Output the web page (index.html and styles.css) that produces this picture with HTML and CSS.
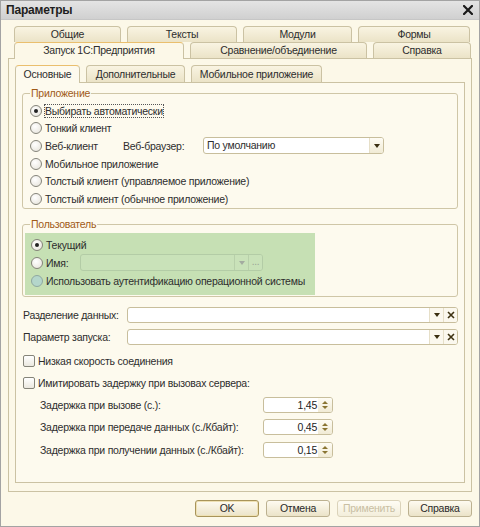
FILE: index.html
```html
<!DOCTYPE html>
<html lang="ru">
<head>
<meta charset="utf-8">
<title>Параметры</title>
<link rel="stylesheet" href="styles.css">
</head>
<body>
<div class="window">
  <div class="titlebar">
    <span class="title">Параметры</span>
    <span class="close"><svg width="10" height="10" viewBox="0 0 10 10"><path d="M1 1L9 9M9 1L1 9" stroke="#1a1a1a" stroke-width="2.2" stroke-linecap="square"/></svg></span>
  </div>
  <div class="body">
    <div class="tabrow row1">
      <div class="tab w107">Общие</div>
      <div class="tab w110">Тексты</div>
      <div class="tab w109">Модули</div>
      <div class="tab w112">Формы</div>
    </div>
    <div class="tabrow row2">
      <div class="tab sel w170">Запуск 1С:Предприятия</div>
      <div class="tab w177">Сравнение/объединение</div>
      <div class="tab w98">Справка</div>
    </div>
    <div class="panel outer">
      <div class="tabrow itabs">
        <div class="tab sel w65">Основные</div>
        <div class="tab w99">Дополнительные</div>
        <div class="tab w131">Мобильное приложение</div>
      </div>
      <div class="panel inner">
        <div class="group g1">
          <div class="legend">Приложение</div>
          <div class="rows">
            <div class="row"><span class="radio checked"></span><span class="focus">Выбирать автоматически</span></div>
            <div class="row"><span class="radio"></span><span>Тонкий клиент</span></div>
            <div class="row">
              <span class="ritem w93"><span class="radio"></span><span>Веб-клиент</span></span>
              <span class="lbl w80">Веб-браузер:</span>
              <span class="combo w181"><span class="val">По умолчанию</span><span class="cbtn"><span class="arrow"></span></span></span>
            </div>
            <div class="row"><span class="radio"></span><span>Мобильное приложение</span></div>
            <div class="row"><span class="radio"></span><span>Толстый клиент (управляемое приложение)</span></div>
            <div class="row"><span class="radio"></span><span>Толстый клиент (обычное приложение)</span></div>
          </div>
        </div>
        <div class="group g2">
          <div class="legend">Пользователь</div>
          <div class="green">
            <div class="row"><span class="radio checked"></span><span>Текущий</span></div>
            <div class="row">
              <span class="ritem w49"><span class="radio"></span><span>Имя:</span></span>
              <span class="combo dis w183"><span class="val"></span><span class="cbtn"><span class="arrow grey"></span></span><span class="cbtn dots">...</span></span>
            </div>
            <div class="row"><span class="radio hl"></span><span>Использовать аутентификацию операционной системы</span></div>
          </div>
        </div>
        <div class="frow f1">
          <span class="flabel">Разделение данных:</span>
          <span class="combo field"><span class="val"></span><span class="cbtn"><span class="arrow"></span></span><span class="cbtn"><svg width="8" height="8" viewBox="0 0 8 8"><path d="M1 1L7 7M7 1L1 7" stroke="#3e3212" stroke-width="1.6"/></svg></span></span>
        </div>
        <div class="frow f2">
          <span class="flabel">Параметр запуска:</span>
          <span class="combo field"><span class="val"></span><span class="cbtn"><span class="arrow"></span></span><span class="cbtn"><svg width="8" height="8" viewBox="0 0 8 8"><path d="M1 1L7 7M7 1L1 7" stroke="#3e3212" stroke-width="1.6"/></svg></span></span>
        </div>
        <div class="crow c1"><span class="check"></span><span>Низкая скорость соединения</span></div>
        <div class="crow c2"><span class="check"></span><span>Имитировать задержку при вызовах сервера:</span></div>
        <div class="drow d1"><span class="dlabel">Задержка при вызове (с.):</span><span class="spin"><span class="val">1,45</span><span class="sbtn"><span class="up"></span><span class="down"></span></span></span></div>
        <div class="drow d2"><span class="dlabel">Задержка при передаче данных (с./Кбайт):</span><span class="spin"><span class="val">0,45</span><span class="sbtn"><span class="up"></span><span class="down"></span></span></span></div>
        <div class="drow d3"><span class="dlabel">Задержка при получении данных (с./Кбайт):</span><span class="spin"><span class="val">0,15</span><span class="sbtn"><span class="up"></span><span class="down"></span></span></span></div>
      </div>
    </div>
    <div class="buttons">
      <div class="button default">OK</div>
      <div class="button">Отмена</div>
      <div class="button disabled">Применить</div>
      <div class="button">Справка</div>
    </div>
  </div>
</div>
</body>
</html>
```
FILE: styles.css
```css
* { box-sizing: border-box; }
html, body { margin: 0; padding: 0; }
body {
  width: 480px;
  height: 527px;
  font-family: "Liberation Sans", Arial, sans-serif;
  font-size: 10.5px;
  letter-spacing: -0.25px;
  color: #2d2d2d;
  background: #fcf8e8;
  overflow: hidden;
}
.window {
  width: 480px;
  height: 527px;
  border: 1px solid #a3a3a3;
  background: #fcf8e8;
  display: flex;
  flex-direction: column;
}
.titlebar {
  height: 19px;
  flex: none;
  display: flex;
  align-items: center;
  justify-content: space-between;
  padding: 0 6px 0 5px;
  background: linear-gradient(#e4e4e4, #d0d0d0);
  border-bottom: 1px solid #c6c6c6;
}
.title { font-weight: bold; font-size: 12px; letter-spacing: -0.2px; color: #1e1e1e; }
.close svg { display: block; }
.body {
  flex: 1;
  padding: 6px 7px 0;
  display: flex;
  flex-direction: column;
}
.tabrow { display: flex; gap: 6px; height: 16px; align-items: flex-start; flex: none; }
.row1, .row2 { padding-left: 6px; }
.tab {
  height: 16px;
  border: 1px solid #cbc2a3;
  border-bottom: none;
  border-radius: 4px 4px 0 0;
  background: linear-gradient(#f9f4e2, #ebe3c7);
  text-align: center;
  line-height: 15px;
  white-space: nowrap;
  flex: none;
}
.tab.sel {
  height: 17px;
  position: relative;
  z-index: 1;
  background: #fcf8e8;
  border-top-color: #eabf6e;
}
.itabs { height: 17px; }
.itabs .tab { height: 17px; line-height: 16px; }
.itabs .tab.sel { height: 18px; background: #fdfaee; }
.w107 { width: 107px; } .w110 { width: 110px; } .w109 { width: 109px; } .w112 { width: 112px; }
.w170 { width: 170px; } .w177 { width: 177px; } .w98 { width: 98px; }
.w65 { width: 65px; } .w99 { width: 99px; } .w131 { width: 131px; }

.panel { border: 1px solid #cbc2a3; flex: none; }
.outer { height: 434px; padding: 6px 6px 0; background: #fcf8e8; display: flex; flex-direction: column; }
.inner { height: 401px; padding: 0 6px; background: #fdfaee; }

.group { border: 1px solid #cfc6a7; border-radius: 3px; }
.g1 { margin-top: 10px; }
.g2 { margin-top: 15px; }
.legend {
  width: max-content;
  margin: -7px 0 0 7px;
  padding: 0 1px;
  line-height: 13px;
  height: 13px;
  background: #fdfaee;
  color: #a05a18;
}
.rows { padding: 2px 0 0 7px; }
.row { height: 17.6px; display: flex; align-items: center; white-space: nowrap; }
.radio {
  width: 12px;
  height: 12px;
  border-radius: 50%;
  border: 1px solid #85847a;
  background: radial-gradient(circle at 40% 35%, #ffffff, #e4e1d7);
  margin-right: 3px;
  flex: none;
  display: flex;
  align-items: center;
  justify-content: center;
}
.radio.checked::after {
  content: "";
  width: 4px;
  height: 4px;
  border-radius: 50%;
  background: #222;
}
.radio.hl { background: #b4d6cb; border-color: #8fa8a0; }
.focus { outline: 1px dotted #555; outline-offset: 0; }
.ritem { display: flex; align-items: center; flex: none; }
.w93 { width: 93px; } .w49 { width: 49px; }
.lbl { flex: none; }
.w80 { width: 80px; }
.combo {
  display: flex;
  height: 17px;
  border: 1px solid #c8be9c;
  border-radius: 3px;
  background: #fff;
  overflow: hidden;
  flex: none;
}
.w181 { width: 181px; } .w183 { width: 183px; }
.combo .val { flex: 1; padding-left: 3px; line-height: 15px; }
.cbtn {
  width: 14px;
  flex: none;
  display: flex;
  align-items: center;
  justify-content: center;
  border-left: 1px solid #e6dfc8;
  background: linear-gradient(#fefcf4, #f1ebd5);
}
.arrow {
  width: 0;
  height: 0;
  border-left: 3.5px solid transparent;
  border-right: 3.5px solid transparent;
  border-top: 4px solid #3a2e10;
}
.arrow.grey { border-top-color: #a3aba0; }
.combo.dis { border-color: #b3cca6; background: #c9e2b9; }
.combo.dis .cbtn { background: #c9e2b9; border-left-color: #b8d0aa; }
.cbtn.dots { color: #9aa596; line-height: 10px; align-items: flex-end; padding-bottom: 3px; font-size: 10px; }
.green {
  width: 290px;
  margin: 2px 0 1px 2px;
  padding: 4px 0 6px 6px;
  background: #c6e0b4;
}

.frow { display: flex; align-items: center; height: 16px; }
.f1 { margin-top: 10px; }
.f2 { margin-top: 6px; }
.flabel { width: 105px; padding-left: 1px; flex: none; white-space: nowrap; }
.combo.field { flex: 1; height: 16px; }
.combo.field .cbtn { background: #fbf8ee; }
.crow { display: flex; align-items: center; height: 16px; padding-left: 1px; white-space: nowrap; }
.c1 { margin-top: 8px; }
.c2 { margin-top: 6px; }
.check {
  width: 12px;
  height: 12px;
  border: 1px solid #858479;
  border-radius: 2px;
  background: linear-gradient(#ffffff, #ebe8df);
  margin-right: 3px;
  flex: none;
}
.drow { display: flex; align-items: center; height: 16px; padding-left: 18px; }
.d1 { margin-top: 6px; }
.d2 { margin-top: 6px; }
.d3 { margin-top: 6.5px; }
.dlabel { width: 223px; flex: none; white-space: nowrap; }
.spin {
  width: 70px;
  height: 16px;
  display: flex;
  border: 1px solid #c8be9c;
  border-radius: 3px;
  background: #fff;
  overflow: hidden;
}
.spin .val { flex: 1; text-align: right; padding-right: 1px; line-height: 14px; color: #222; }
.sbtn {
  width: 14px;
  display: flex;
  flex-direction: column;
  align-items: center;
  justify-content: center;
  gap: 2px;
  background: linear-gradient(#fefcf4, #f1ebd5);
}
.up {
  width: 0; height: 0;
  border-left: 3px solid transparent;
  border-right: 3px solid transparent;
  border-bottom: 3px solid #8a7532;
}
.down {
  width: 0; height: 0;
  border-left: 3px solid transparent;
  border-right: 3px solid transparent;
  border-top: 3px solid #8a7532;
}

.buttons { display: flex; justify-content: flex-end; gap: 7px; margin-top: 8px; }
.button {
  width: 64px;
  height: 17px;
  border: 1px solid #bcb190;
  border-radius: 3px;
  background: linear-gradient(#fefbf1, #ebe3c8);
  text-align: center;
  line-height: 15px;
  color: #2a2a2a;
}
.button.default { border-color: #a8945a; box-shadow: inset 0 0 0 1px #efe1b4; }
.button.disabled { color: #c9bfa3; border-color: #dbd3ba; background: linear-gradient(#fefcf4, #f3eedb); }
```
